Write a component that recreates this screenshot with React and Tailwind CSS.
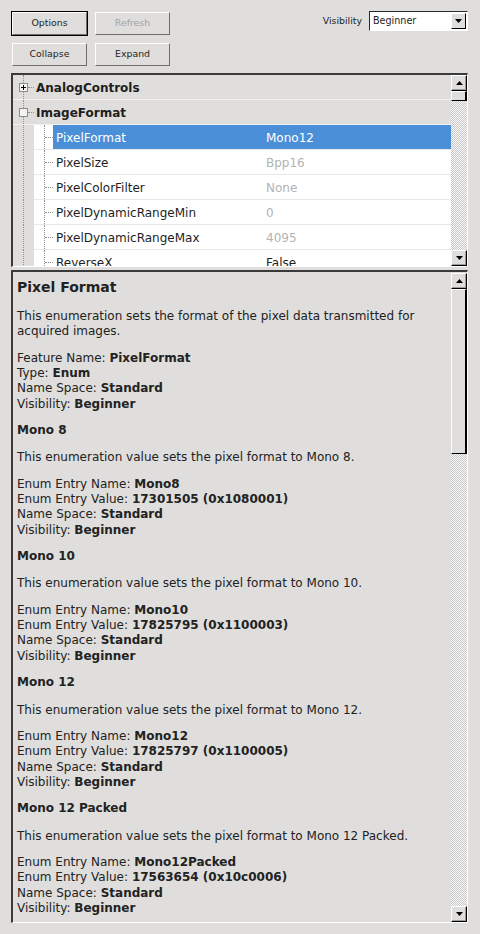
import React from 'react';

const font = { fontFamily: '"DejaVu Sans", Verdana, sans-serif' };

const Btn = ({ children, focus, disabled }) => (
    <div className={focus ? 'p-px bg-black' : 'p-px'}>
        <div
            className={
                'w-[75px] h-[23px] flex items-center justify-center text-[9.4px] bg-[#dfdedc] border border-t-white border-l-white border-r-[#6e6e6e] border-b-[#6e6e6e] ' +
                (disabled ? 'text-[#a3a3a3]' : 'text-[#1e1e1e]')
            }
        >
            {children}
        </div>
    </div>
);

const ArrowBtn = ({ down }) => (
    <div className="w-[16px] h-[16px] shrink-0 flex items-center justify-center bg-[#dfdedc] border border-t-white border-l-white border-r-black border-b-black shadow-[inset_-1px_-1px_0_#9d9d9d]">
        <svg width="7" height="4" viewBox="0 0 7 4">
            <path d={down ? 'M0 0h7L3.5 4z' : 'M0 4h7L3.5 0z'} fill="#000" />
        </svg>
    </div>
);

const Trough = () => (
    <div className="flex-1 bg-[repeating-conic-gradient(#c9c9c9_0%_25%,#f7f7f7_0%_50%)] bg-[length:2px_2px]" />
);

const Thumb = ({ h }) => (
    <div className={h + ' shrink-0 bg-[#dfdedc] border-t border-l border-t-white border-l-white border-r-2 border-b border-r-black border-b-black'} />
);

const Gutter = ({ children }) => (
    <div className="relative w-[21px] shrink-0 h-full">
        <div className="absolute left-[10px] top-0 bottom-0 border-l border-dotted border-[#8f8f8f]" />
        {children}
    </div>
);

const Category = ({ name, open }) => (
    <div className="flex h-[25px] shrink-0 border-b border-[#f1f1f0]">
        <Gutter>
            <div className="absolute left-[6px] top-[8px] w-[9px] h-[9px] border border-[#8c8c8c] bg-[#f4f4f3] flex items-center justify-center">
                {!open && (
                    <svg width="7" height="7" viewBox="0 0 7 7">
                        <path d="M1 3.5h5M3.5 1v5" stroke="#000" strokeWidth="1" />
                    </svg>
                )}
            </div>
            <div className="absolute left-[15px] top-[12px] w-[6px] border-t border-dotted border-[#8f8f8f]" />
        </Gutter>
        <span className="pl-[2px] pt-px font-bold text-[12px] leading-[24px] text-[#1e1e1e]">{name}</span>
    </div>
);

const Child = ({ name, value, selected, dark }) => (
    <div className="flex h-[25px] shrink-0">
        <Gutter />
        <div className="flex flex-1 bg-white border-b border-[#e8e8e8]">
            <div className="relative w-[19px] shrink-0">
                <div className="absolute left-[10px] top-0 bottom-0 border-l border-dotted border-[#8f8f8f]" />
                <div className="absolute left-[11px] top-[12px] w-[8px] border-t border-dotted border-[#8f8f8f]" />
            </div>
            <div className={selected ? 'flex flex-1 bg-[#4a8fd8] text-white' : 'flex flex-1 text-[#1e1e1e]'}>
                <div className="w-[210px] pl-[3px] pt-px text-[12px] leading-[24px]">{name}</div>
                <div
                    className={
                        'flex-1 pl-[3px] pt-px text-[12px] leading-[24px] ' +
                        (selected ? 'text-white' : dark ? 'text-[#1e1e1e]' : 'text-[#b3b3b3]')
                    }
                >
                    {value}
                </div>
            </div>
        </div>
    </div>
);

const Line = ({ label, value }) => (
    <div>
        {label} <b>{value}</b>
    </div>
);

const entries = [
    { title: 'Mono 8', text: 'Mono 8', name: 'Mono8', value: '17301505 (0x1080001)' },
    { title: 'Mono 10', text: 'Mono 10', name: 'Mono10', value: '17825795 (0x1100003)' },
    { title: 'Mono 12', text: 'Mono 12', name: 'Mono12', value: '17825797 (0x1100005)' },
    { title: 'Mono 12 Packed', text: 'Mono 12 Packed', name: 'Mono12Packed', value: '17563654 (0x10c0006)' },
];

export default function App() {
    return (
        <div className="w-[480px] h-[934px] bg-[#dfdedc] overflow-hidden pt-[11px]" style={font}>
            <div className="flex items-start pl-[11px] pr-[12px]">
                <Btn focus>Options</Btn>
                <div className="ml-[6px]">
                    <Btn disabled>Refresh</Btn>
                </div>
                <div className="flex-1" />
                <div className="flex items-center">
                    <span className="text-[9.4px] text-[#1e1e1e] mr-[7px]">Visibility</span>
                    <div className="w-[99px] h-[20px] flex border-t border-l border-t-[#2a2a2a] border-l-[#2a2a2a] border-r border-b border-r-white border-b-white bg-white">
                        <span className="flex-1 pl-[3px] text-[9.6px] leading-[18px] text-[#1e1e1e]">Beginner</span>
                        <div className="mt-px mr-px">
                            <div className="w-[15px] h-[16px] flex items-center justify-center bg-[#dfdedc] border border-t-white border-l-white border-r-black border-b-black">
                                <svg width="7" height="4" viewBox="0 0 7 4">
                                    <path d="M0 0h7L3.5 4z" fill="#000" />
                                </svg>
                            </div>
                        </div>
                    </div>
                </div>
            </div>

            <div className="flex pl-[11px] mt-[6px]">
                <Btn>Collapse</Btn>
                <div className="ml-[6px]">
                    <Btn>Expand</Btn>
                </div>
            </div>

            {/* feature tree */}
            <div className="ml-[11px] mt-[6px] w-[457px] h-[194px] flex border-t-2 border-l-2 border-t-[#3a3a3a] border-l-[#3a3a3a] border-r border-b border-r-white border-b-white">
                <div className="flex-1 flex flex-col overflow-hidden">
                    <Category name="AnalogControls" />
                    <Category name="ImageFormat" open />
                    <Child name="PixelFormat" value="Mono12" selected />
                    <Child name="PixelSize" value="Bpp16" />
                    <Child name="PixelColorFilter" value="None" />
                    <Child name="PixelDynamicRangeMin" value="0" />
                    <Child name="PixelDynamicRangeMax" value="4095" />
                    <Child name="ReverseX" value="False" dark />
                </div>
                <div className="w-[16px] flex flex-col">
                    <ArrowBtn />
                    <Thumb h="h-[10px]" />
                    <Trough />
                    <ArrowBtn down />
                </div>
            </div>

            {/* description */}
            <div className="ml-[11px] mt-[3px] w-[457px] h-[653px] flex border-t-2 border-l-2 border-t-[#3a3a3a] border-l-[#3a3a3a] border-r border-b border-r-white border-b-white">
                <div className="flex-1 overflow-hidden pl-[4px] pt-[6px] text-[12px] leading-[15.4px] text-[#222]">
                    <div className="text-[14px] font-bold leading-[18px] mb-[13px]">Pixel Format</div>
                    <p className="mb-[10.8px]">
                        This enumeration sets the format of the pixel data transmitted for
                        <br />
                        acquired images.
                    </p>
                    <div className="mb-[10.8px]">
                        <Line label="Feature Name:" value="PixelFormat" />
                        <Line label="Type:" value="Enum" />
                        <Line label="Name Space:" value="Standard" />
                        <Line label="Visibility:" value="Beginner" />
                    </div>
                    {entries.map((e) => (
                        <div key={e.name}>
                            <div className="font-bold mb-[12px]">{e.title}</div>
                            <p className="mb-[10.8px]">This enumeration value sets the pixel format to {e.text}.</p>
                            <div className="mb-[10.8px]">
                                <Line label="Enum Entry Name:" value={e.name} />
                                <Line label="Enum Entry Value:" value={e.value} />
                                <Line label="Name Space:" value="Standard" />
                                <Line label="Visibility:" value="Beginner" />
                            </div>
                        </div>
                    ))}
                </div>
                <div className="w-[16px] flex flex-col pt-px">
                    <ArrowBtn />
                    <Thumb h="h-[165px]" />
                    <Trough />
                    <ArrowBtn down />
                </div>
            </div>
        </div>
    );
}
